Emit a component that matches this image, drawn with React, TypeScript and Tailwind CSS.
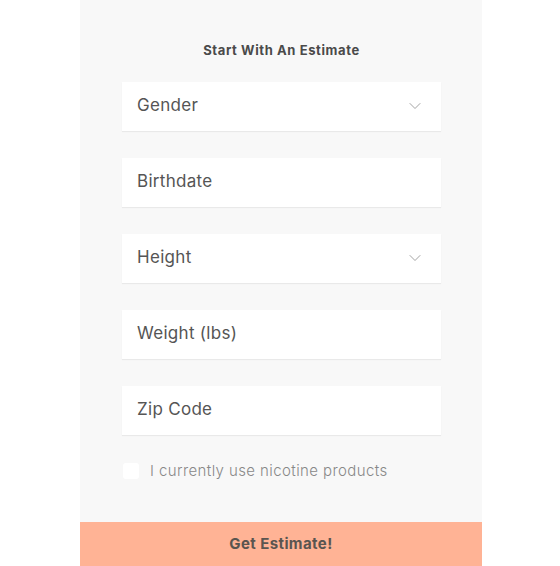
import { ChevronDown } from "lucide-react";

const font = { fontFamily: '"Inter", "Open Sans", sans-serif' };

// Single form field - select style shows a chevron on the right
const Field = ({ label, select = false }: { label: string; select?: boolean }) => {
    return (
        <div className="flex h-[49px] items-center justify-between bg-white pl-[15px] pr-[16px] shadow-[0_1px_1px_rgba(0,0,0,0.06)]">
            <span className="text-[17px] tracking-[0.3px] text-[#555]">{label}</span>
            {select && <ChevronDown className="h-[20px] w-[20px] text-[#999]" strokeWidth={1.1} />}
        </div>
    );
};

const App = () => {
    return (
        <div className="flex h-[566px] w-full bg-white" style={font}>
            <div className="ml-[80px] flex w-[402px] flex-col bg-[#f8f8f8]">
                <div className="flex flex-1 flex-col pl-[42px] pr-[41px]">
                    <h2 className="mt-[41px] text-center text-[13px] font-bold tracking-[0.6px] text-[#4a4a4a]">
                        Start With An Estimate
                    </h2>

                    <div className="mt-[21px] flex flex-col gap-[27px]">
                        <Field label="Gender" select />
                        <Field label="Birthdate" />
                        <Field label="Height" select />
                        <Field label="Weight (lbs)" />
                        <Field label="Zip Code" />
                    </div>

                    <label className="mt-[25px] flex items-center gap-[11px]">
                        <span className="ml-px h-[16px] w-[16px] rounded-[3px] bg-white" />
                        <span className="text-[15px] font-light tracking-[0.4px] text-[#888]">
                            I currently use nicotine products
                        </span>
                    </label>
                </div>

                <button className="flex h-[44px] items-center justify-center bg-[#ffb395] text-[15px] font-bold tracking-[0.4px] text-[#5a5550]">
                    Get Estimate!
                </button>
            </div>
        </div>
    );
};

export default App;
